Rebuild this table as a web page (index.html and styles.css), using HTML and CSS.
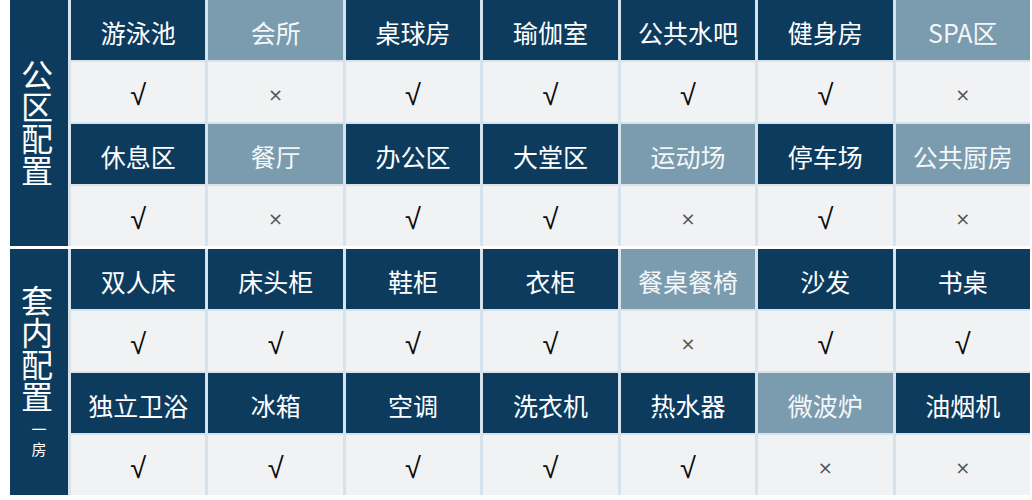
FILE: index.html
```html
<!DOCTYPE html>
<html lang="zh-CN">
<head>
<meta charset="utf-8">
<link rel="stylesheet" href="styles.css">
</head>
<body>
<div class="table">
  <div class="section">
    <div class="label"><span class="big">公区配置</span></div>
    <div class="grid">
      <div class="h">游泳池</div><div class="h l">会所</div><div class="h">桌球房</div><div class="h">瑜伽室</div><div class="h">公共水吧</div><div class="h">健身房</div><div class="h l">SPA区</div>
      <div class="c y">√</div><div class="c n">×</div><div class="c y">√</div><div class="c y">√</div><div class="c y">√</div><div class="c y">√</div><div class="c n">×</div>
      <div class="h">休息区</div><div class="h l">餐厅</div><div class="h">办公区</div><div class="h">大堂区</div><div class="h l">运动场</div><div class="h">停车场</div><div class="h l">公共厨房</div>
      <div class="c y">√</div><div class="c n">×</div><div class="c y">√</div><div class="c y">√</div><div class="c n">×</div><div class="c y">√</div><div class="c n">×</div>
    </div>
  </div>
  <div class="section">
    <div class="label"><span class="big">套内配置</span><span class="small">一<br>房</span></div>
    <div class="grid">
      <div class="h">双人床</div><div class="h">床头柜</div><div class="h">鞋柜</div><div class="h">衣柜</div><div class="h l">餐桌餐椅</div><div class="h">沙发</div><div class="h">书桌</div>
      <div class="c y">√</div><div class="c y">√</div><div class="c y">√</div><div class="c y">√</div><div class="c n">×</div><div class="c y">√</div><div class="c y">√</div>
      <div class="h">独立卫浴</div><div class="h">冰箱</div><div class="h">空调</div><div class="h">洗衣机</div><div class="h">热水器</div><div class="h l">微波炉</div><div class="h">油烟机</div>
      <div class="c y">√</div><div class="c y">√</div><div class="c y">√</div><div class="c y">√</div><div class="c y">√</div><div class="c n">×</div><div class="c n">×</div>
    </div>
  </div>
</div>
</body>
</html>
```
FILE: styles.css
```css
html, body {
  margin: 0;
  padding: 0;
  background: #ffffff;
}
body {
  width: 1032px;
  height: 500px;
  overflow: hidden;
  font-family: "Noto Sans CJK SC", "Noto Sans", sans-serif;
}
.table {
  display: flex;
  flex-direction: column;
  gap: 3px;
  padding: 0 2px 0 10px;
}
.section {
  display: flex;
  gap: 3px;
  background: #d6e3ec;
}
.label {
  width: 58px;
  flex: none;
  background: #0d3b5e;
  color: #ffffff;
  display: flex;
  flex-direction: column;
  align-items: center;
  justify-content: center;
}
.big {
  writing-mode: vertical-rl;
  font-size: 32px;
  line-height: 40px;
  margin-right: 4px;
}
.small {
  font-size: 15px;
  line-height: 20px;
  margin-top: 6px;
  text-align: center;
}
.grid {
  flex: 1;
  display: grid;
  grid-template-columns: repeat(7, 1fr);
  grid-auto-rows: 60px;
  gap: 2px 3px;
}
.h {
  background: #0d3b5e;
  color: #ffffff;
  font-size: 25px;
  display: flex;
  align-items: center;
  justify-content: center;
  padding-top: 3px;
  box-sizing: border-box;
}
.h.l {
  background: #7b9baf;
  color: #f4f7f9;
}
.c {
  background: #f1f2f3;
  display: flex;
  align-items: center;
  justify-content: center;
}
.y {
  color: #0a0a0a;
  font-size: 29px;
  font-family: "Liberation Sans", sans-serif;
  padding-top: 6px;
  box-sizing: border-box;
}
.n {
  color: #555555;
  font-size: 18px;
  font-family: "DejaVu Sans", sans-serif;
  padding-top: 4px;
  box-sizing: border-box;
}
```
